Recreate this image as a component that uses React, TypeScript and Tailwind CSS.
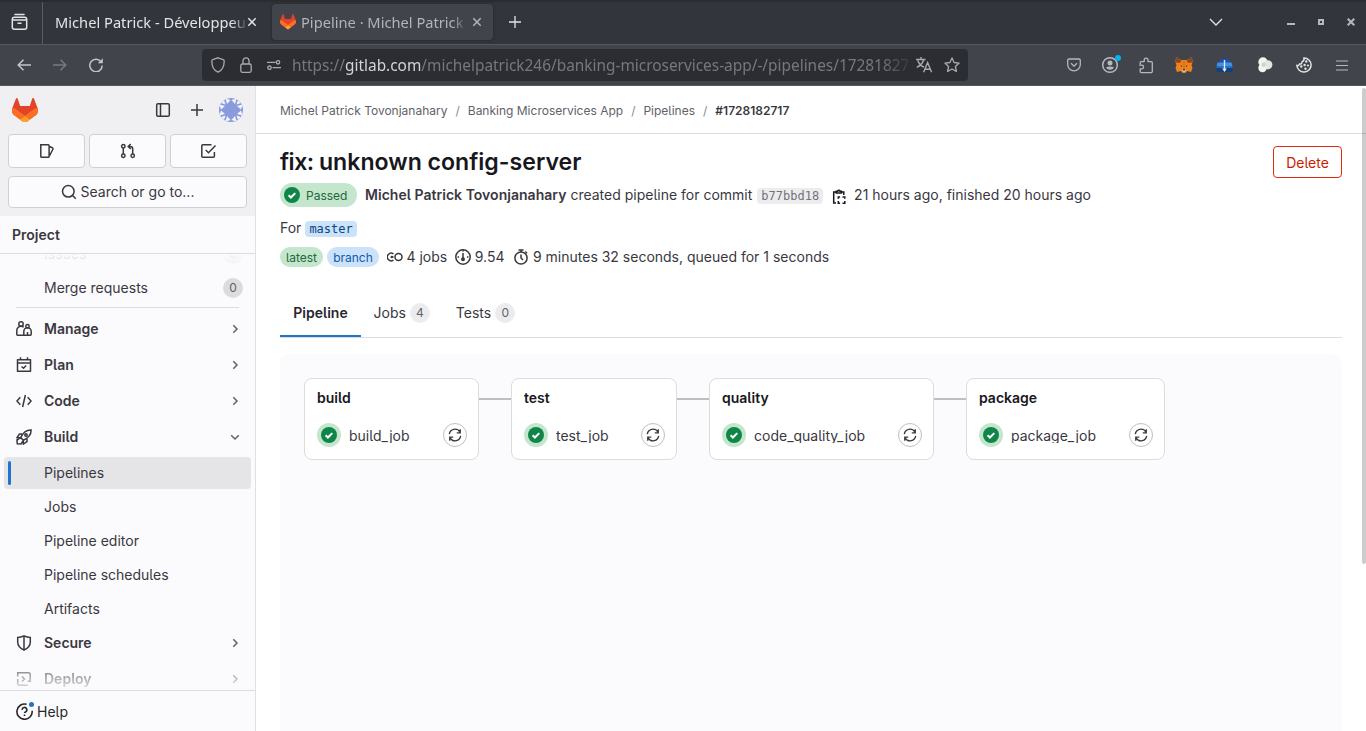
import type { ReactNode } from "react";

const stroke = {
  fill: "none",
  stroke: "currentColor",
  strokeWidth: 1.5,
} as const;

function Icon({ children, size = 16 }: { children: ReactNode; size?: number }) {
  return (
    <svg width={size} height={size} viewBox="0 0 16 16" className="shrink-0" {...stroke}>
      {children}
    </svg>
  );
}

function Tanuki({ size }: { size: number }) {
  return (
    <svg width={size} height={size * 0.96} viewBox="0 0 25 24" className="shrink-0">
      <path fill="#E24329" d="m24.507 9.5-.034-.09L21.082.562a.896.896 0 0 0-1.694.091l-2.29 7.01H7.825L5.535.653a.898.898 0 0 0-1.694-.09L.451 9.411.416 9.5a6.297 6.297 0 0 0 2.09 7.278l.012.01.03.022 5.16 3.867 2.56 1.935 1.554 1.176a1.051 1.051 0 0 0 1.268 0l1.555-1.176 2.56-1.935 5.197-3.89.014-.01A6.297 6.297 0 0 0 24.507 9.5Z" />
      <path fill="#FC6D26" d="m24.507 9.5-.034-.09a11.44 11.44 0 0 0-4.56 2.051l-7.447 5.632 4.742 3.584 5.197-3.89.014-.01A6.297 6.297 0 0 0 24.507 9.5Z" />
      <path fill="#FCA326" d="m7.707 20.677 2.56 1.935 1.555 1.176a1.051 1.051 0 0 0 1.268 0l1.555-1.176 2.56-1.935-4.743-3.584-4.755 3.584Z" />
      <path fill="#FC6D26" d="M5.01 11.461a11.43 11.43 0 0 0-4.56-2.05L.416 9.5a6.297 6.297 0 0 0 2.09 7.278l.012.01.03.022 5.16 3.867 4.745-3.584-7.444-5.632Z" />
    </svg>
  );
}

function CloseIcon() {
  return (
    <svg width="10" height="10" viewBox="0 0 10 10" className="shrink-0" {...stroke}>
      <path d="m1.3 1.3 7.4 7.4M8.7 1.3 1.3 8.7" />
    </svg>
  );
}

function TabStrip() {
  return (
    <div className="flex h-11 shrink-0 items-center border-t-2 border-[#2b2c31] bg-[#33353d] pb-0.5 text-[#e3e4e6]">
      <div className="-mb-0.5 flex h-[42px] w-[43px] shrink-0 items-center border-r border-[#5b5d64] pb-0.5 pl-[11px]">
        <svg width="17" height="18" viewBox="0 0 17 18" {...stroke}>
          <path d="M4 1.500h9" strokeLinecap="round" />
          <path d="M1.300 8V6.500q0-2.200 2.200-2.200h10q2.200 0 2.200 2.200V8M1.300 7v7.200q0 2 2 2h10.400q2 0 2-2V7zM6.500 10.300h4" />
        </svg>
      </div>
      <div className="flex w-[229px] shrink-0 items-center pl-3">
        <div className="w-[190px] overflow-hidden whitespace-nowrap text-[14.67px] [mask-image:linear-gradient(to_right,#000_93%,#0003)]">
          Michel Patrick - Développeur
        </div>
        <span className="ml-0.5">
          <CloseIcon />
        </span>
      </div>
      <div className="flex h-9 w-[221px] shrink-0 items-center rounded bg-[#42444b] pl-2 text-[#b3b4b8] shadow-[0_0_3px_#22242a]">
        <Tanuki size={16} />
        <div className="ml-[5px] w-[169px] overflow-hidden whitespace-nowrap text-[14.67px] [mask-image:linear-gradient(to_right,#000_90%,transparent_98%)]">
          Pipeline · Michel Patrick Tovonjanahary
        </div>
        <span className="ml-0.5">
          <CloseIcon />
        </span>
      </div>
      <svg width="12" height="12" viewBox="0 0 12 12" className="ml-4 shrink-0" {...stroke}>
        <path d="M6 0v12M0 6h12" strokeWidth="1.300" />
      </svg>
      <div className="flex-1" />
      <svg width="14" height="8" viewBox="0 0 14 8" className="mr-16" {...stroke} strokeWidth="1.300">
        <path d="m1 1 6 6 6-6" />
      </svg>
      <div className="mr-[11px] flex items-center text-[#b7b8bc]">
        <div className="mt-1 mr-[23px] h-0.5 w-2 bg-current" />
        <div className="mr-[23px] size-1.5 border-2 border-current" />
        <svg width="8" height="8" viewBox="0 0 8 8" fill="none" stroke="currentColor" strokeWidth="2">
          <path d="m.7.7 6.600 6.600M7.300.7.7 7.300" />
        </svg>
      </div>
    </div>
  );
}

function AddressBar() {
  return (
    <div className="flex h-8 w-[766px] shrink-0 items-center rounded bg-[#2c2d33] pl-[9px] text-[#a9aaae]">
      <svg width="14" height="16" viewBox="0 0 14 16" {...stroke} strokeWidth="1.300">
        <path d="M7 .8 12.200 2.600q1 .3 1 1.400C13.200 9 11 13.500 7 15.200 3 13.500.8 9 .8 4q0-1.100 1-1.400z" />
      </svg>
      <svg width="12" height="16" viewBox="0 0 12 16" className="ml-[15px]" {...stroke} strokeWidth="1.300">
        <rect x=".8" y="7" width="10.400" height="8.300" rx="1.500" />
        <path d="M3 7V3.800a3 3 0 0 1 6 0V7" />
      </svg>
      <svg width="14" height="10" viewBox="0 0 14 10" className="ml-[15px]" {...stroke} strokeWidth="1.300">
        <path d="M0 2.300h8.500M5.500 7.700H14" />
        <circle cx="11" cy="2.300" r="1.700" />
        <circle cx="2.500" cy="7.700" r="1.700" />
      </svg>
      <div className="mt-0.5 ml-[11px] w-[616px] overflow-hidden whitespace-nowrap text-[15.4px] text-[#77787d] [mask-image:linear-gradient(to_right,#000_95.500%,#0003)]">
        https://<span className="text-[#d3d4d7]">gitlab.com</span>
        /michelpatrick246/banking-microservices-app/-/pipelines/1728182717
      </div>
      <svg width="17" height="16" viewBox="0 0 17 16" className="ml-2" {...stroke} strokeWidth="1.400">
        <path d="M0 2.500h9.500M5 0v2.500M7.800 2.500C7 6 4.500 8.500.8 10.300M1.800 3.500C3 7 5 9 8 10M7.600 15.300l4-9.800 4 9.800M9 12.300h5.200" />
      </svg>
      <svg width="16" height="16" viewBox="0 0 16 16" className="ml-[11px]" {...stroke} strokeWidth="1.300">
        <path strokeLinejoin="round" d="m8 .9 2.100 4.600 5 .6-3.700 3.400 1 5L8 12l-4.400 2.500 1-5L.9 6.100l5-.6z" />
      </svg>
    </div>
  );
}

function Extensions() {
  return (
    <div className="flex items-center text-[#b7b8bc]">
      <svg width="14" height="14" viewBox="0 0 14 14" {...stroke} strokeWidth="1.300">
        <path d="M2 1h10q1.300 0 1.300 1.300V6.500a6.300 6.300 0 0 1-12.600 0V2.300Q.7 1 2 1zM4 5.200l3 2.900 3-2.900" />
      </svg>
      <div className="relative ml-5">
        <svg width="18" height="18" viewBox="0 0 18 18" {...stroke}>
          <circle cx="9" cy="9" r="7.300" />
          <circle cx="9" cy="7" r="2.500" fill="currentColor" stroke="none" />
          <path d="M5 11.200q4-1.500 8 0-1 2.600-4 2.600t-4-2.600z" fill="currentColor" stroke="none" />
        </svg>
        <span className="absolute -top-px left-[14px] size-1.5 rounded-full bg-[#00b3f4]" />
      </div>
      <svg width="16" height="17" viewBox="0 0 16 17" className="ml-[19px]" {...stroke} strokeWidth="1.300">
        <path strokeLinejoin="round" d="M2.200 7.200V5.600q0-1 1-1h3V3a1.900 1.900 0 0 1 3.800 0v1.600h3.300q1 0 1 1v9q0 1-1 1H3.200q-1 0-1-1v-2.800h1.600a1.800 1.800 0 0 0 0-3.600H1.200" />
      </svg>
      <svg width="18" height="16" viewBox="0 0 18 16" className="ml-[21px]">
        <path fill="#f0821e" d="M1 0l5.500 3h5L17 0l.5 5-1 3 1 3-1.500 4-4-1-1.500 2h-3L6 14l-4 1-1.500-4 1-3-1-3z" />
        <path fill="#8a4a20" d="M1 0l5.500 3L5 6 1 5.500zM17 0l-5.500 3L13 6l4-.5z" />
        <path fill="#35363c" d="M5 8.300l2.500.8-.6 1zM13 8.300l-2.500.8.6 1z" />
        <path fill="#e2761b" d="M7 4h4l-1 8H8z" />
        <path fill="#d8d2cc" d="M7.300 12h3.400l-.4 2.800H7.700z" />
        <path fill="#35363c" d="M7.800 12h2.400l-.4 1.500H8.200z" />
      </svg>
      <svg width="17" height="15" viewBox="0 0 17 15" className="ml-[23px]">
        <path fill="#1b4fc4" d="M3 5C3 2 5 1 8.500 1S14 2 14 5z" />
        <path fill="#3f93dd" d="M1.500 4.500h14l1 4H.5z" />
        <path fill="#123f80" d="M.5 8h16v6H.5z" />
        <path fill="#2a6fc0" d="M.5 8h16v2H.5z" />
        <path fill="#dcebf8" d="M7.800 2h1.400v8.500h1.600L8.500 14l-2.300-3.500h1.600z" />
      </svg>
      <svg width="16" height="16" viewBox="0 0 16 16" className="ml-6">
        <circle cx="6" cy="5" r="4.700" fill="#f4f4f4" />
        <circle cx="10.800" cy="7.800" r="4.600" fill="#e5e5e5" />
        <circle cx="5.500" cy="11" r="4.200" fill="#f4f4f4" />
        <circle cx="6.700" cy="7.800" r="2.300" fill="#d2d2d2" />
      </svg>
      <svg width="16" height="16" viewBox="0 0 16 16" className="ml-[23px] text-[#e3e4e6]" {...stroke}>
        <path d="M8 .9a7.100 7.100 0 1 0 7.100 7.600q-2 .6-2.600-1.400-2.500.2-2.600-2.300Q7.500 4 8 .9z" transform="matrix(-1 0 0 1 16 0)" />
        <g fill="currentColor" stroke="none">
          <circle cx="10.300" cy="4.500" r="1.200" />
          <circle cx="8.600" cy="8" r="1.200" />
          <circle cx="12" cy="8.500" r="1.100" />
          <circle cx="5.300" cy="9.500" r="1.200" />
          <circle cx="9.500" cy="11.800" r="1.200" />
        </g>
      </svg>
      <svg width="12" height="11" viewBox="0 0 12 11" className="mr-[18px] ml-6" {...stroke} strokeWidth="1.200">
        <path d="M0 1h12M0 5.500h12M0 10h12" />
      </svg>
    </div>
  );
}

function Toolbar() {
  return (
    <div className="flex h-[42px] shrink-0 items-center border-t border-b border-t-[#56585e] border-b-[#55575d] bg-[#42444b] text-[#c4c5c8]">
      <svg width="14" height="12" viewBox="0 0 14 12" className="ml-[17px]" {...stroke}>
        <path d="M14 6H1M6.500.700 1.200 6l5.300 5.300" />
      </svg>
      <svg width="14" height="12" viewBox="0 0 14 12" className="ml-[22px] text-[#77797f]" {...stroke}>
        <path d="M0 6h13M7.500.700 12.800 6l-5.300 5.300" />
      </svg>
      <svg width="14" height="14" viewBox="0 0 14 14" className="mr-[99px] ml-[22px]" {...stroke}>
        <path d="M12.300 4.300A6.200 6.200 0 1 0 13.200 7.600" />
        <path d="M13.800.3v5H8.800z" fill="currentColor" stroke="none" />
      </svg>
      <AddressBar />
      <div className="flex-1" />
      <Extensions />
    </div>
  );
}

const chevronRight = <path d="m6.300 4.200 3.700 3.800-3.700 3.800" />;
const chevronDown = <path d="M4.200 6.300 8 10l3.800-3.700" />;

const icons: Record<string, ReactNode> = {
  Manage: (
    <>
      <circle cx="5" cy="3" r="2.200" />
      <path d="M7.200 14.200H1.700q-.9 0-.9-.9V9.500A4.200 4.200 0 0 1 5 5.300q1.700 0 2.700 1" />
      <circle cx="11.500" cy="5.300" r="1.700" />
      <path d="M7.800 14.200V10.500a3.700 3.700 0 0 1 7.400 0v2.800q0 .9-.9.900zM11.500 11v3" />
    </>
  ),
  Plan: (
    <path d="M1.500 2.700h13v11.500h-13zM1.300 6h13.400M4.500.3v3.200M11.500.3v3.200M5.500 9.500l2 1.700 2.700-2.700" strokeLinejoin="round" />
  ),
  Code: <path d="M4.300 4.200.9 8l3.400 3.800M11.700 4.200 15.100 8l-3.400 3.800M9.400 2 6.600 14" />,
  Build: (
    <>
      <path d="M15.100.9C10 .7 7 3.500 4.700 8.600l2.700 2.700C12.500 9 15.300 6 15.100.9zM6 5H3.500L1 8.600l3.700.2M11 10v2.500L7.400 15l-.2-3.700M4.700 8.600.900 11l.4 3.700L5 15l2.400-3.700" />
      <circle cx="10" cy="6" r="1.200" />
    </>
  ),
  Secure: <path d="M8 .9q3 1.500 6.300 1.600V7.300c0 3.500-2.500 6-6.300 7.900C4.200 13.300 1.700 10.800 1.700 7.300V2.500Q5 2.400 8 .9zV15" />,
  Deploy: (
    <path d="M1.700 5.500V1.700h10.500q2 0 2 2v6.600h-2.500M1.700 8v4.300q0 2 2 2h8M6 5.500 8.500 8 6 10.500" />
  ),
};

function Group({ label, open = false, faded = false }: { label: string; open?: boolean; faded?: boolean }) {
  return (
    <div
      className={`flex h-8 shrink-0 items-center px-4 ${faded ? "[mask-image:linear-gradient(to_bottom,#0009_20%,#0003_75%)]" : ""}`}
    >
      <Icon>{icons[label]}</Icon>
      <span className="ml-3 flex-1 font-semibold">{label}</span>
      <div className="-mr-1 text-[#626168]">
        <Icon>{open ? chevronDown : chevronRight}</Icon>
      </div>
    </div>
  );
}

function SubItem({ label, active = false }: { label: string; active?: boolean }) {
  return (
    <div className={`flex h-8 shrink-0 items-center rounded ${active ? "bg-[#e5e5e7]" : ""}`}>
      <div className={`ml-1 h-6 w-[3px] rounded-full ${active ? "bg-[#1f75cb]" : ""}`} />
      <span className="ml-[33px]">{label}</span>
    </div>
  );
}

function ShortcutButton({ children }: { children: ReactNode }) {
  return (
    <div className="flex h-[34px] w-[77px] items-center justify-center rounded border border-[#d0d0d4] bg-[#fbfafd]">
      <Icon>{children}</Icon>
    </div>
  );
}

function Avatar() {
  return (
    <svg width="24" height="24" viewBox="0 0 24 24" className="ml-[14px]">
      <clipPath id="avatar">
        <circle cx="12" cy="12" r="12" />
      </clipPath>
      <g clipPath="url(#avatar)">
        <rect width="24" height="24" fill="#8a9bdb" />
        <path
          fill="#f4f5fb"
          d="M6.500.5l1.500 5.500 3.500-4zM17.500.5l-1.500 5.500-3.500-4zM6.500 23.500l1.500-5.500 3.500 4zM17.500 23.500l-1.500-5.500-3.500 4zM.5 6.500l5.500 1.500-4 3.500zM.5 17.500l5.500-1.500-4-3.500zM23.500 6.500l-5.500 1.500 4 3.500zM23.500 17.500l-5.500-1.500 4-3.500zM2 5 6.500 6.500 5 2zM22 5l-4.500 1.500L19 2zM2 19l4.500-1.500L5 22zM22 19l-4.500-1.500L19 22z"
        />
      </g>
    </svg>
  );
}

function Sidebar() {
  return (
    <aside className="flex w-64 shrink-0 flex-col border-r border-[#e0e0e4] bg-[#fbfafd] text-[#3a383f]">
      <div className="h-[130px] shrink-0 bg-[#f0eff2] px-2">
        <div className="flex h-12 items-center pl-[3.5px]">
          <Tanuki size={26} />
          <div className="flex-1" />
          <Icon>
            <rect x="1.700" y="1.700" width="12.600" height="12.600" rx="1.300" />
            <path d="M5.500 2v12" />
          </Icon>
          <span className="ml-[18px] flex">
            <Icon>
              <path d="M8 2v12M2 8h12" />
            </Icon>
          </span>
          <div className="mr-1">
            <Avatar />
          </div>
        </div>
        <div className="flex justify-between">
          <ShortcutButton>
            <path d="M1.800 1.700h7.400q.9 0 .9.9v10.800q0 .9-.9.900H2.700q-.9 0-.9-.9zM10.300 3.500l3.200 1.300q.8.400.5 1.200l-3.600 7" />
          </ShortcutButton>
          <ShortcutButton>
            <circle cx="3.300" cy="3.200" r="1.700" />
            <circle cx="3.300" cy="12.800" r="1.700" />
            <circle cx="12.700" cy="12.800" r="1.700" />
            <path d="M3.300 5v6M12.700 11V6q0-2.500-2.500-2.500H8.500M10.700 1 8.200 3.500l2.500 2.500" />
          </ShortcutButton>
          <ShortcutButton>
            <path d="M10.500 1.700H1.800q-1 0-1 1v10.600q0 1 1 1h10.600q1 0 1-1V9M4.700 7 7.500 9.700l7-7.200" />
          </ShortcutButton>
        </div>
        <div className="mt-2 flex h-8 items-center justify-center rounded border border-[#d0d0d4] bg-[#fbfafd]">
          <Icon>
            <circle cx="7.300" cy="7.300" r="5.800" />
            <path d="m11.300 11.300 3.500 3.500" />
          </Icon>
          <span className="ml-1">Search or go to...</span>
        </div>
      </div>
      <div className="flex h-[38px] shrink-0 items-center border-b border-[#dcdcde] pl-3 font-semibold">Project</div>
      <div className="relative flex min-h-0 flex-1 flex-col overflow-hidden px-1">
        <div className="-mt-[16px] flex h-8 shrink-0 items-center opacity-20 [mask-image:linear-gradient(to_bottom,transparent_48%,#000_75%)]">
          <span className="ml-10 flex-1">Issues</span>
          <span className="mr-2 flex size-5 items-center justify-center rounded-full bg-[#dcdcde] text-xs">0</span>
        </div>
        <div className="mt-0.5 flex h-8 shrink-0 items-center">
          <span className="ml-10 flex-1">Merge requests</span>
          <span className="mr-2 flex size-5 items-center justify-center rounded-full bg-[#dcdcde] text-xs text-[#626168]">
            0
          </span>
        </div>
        <div className="mx-3 mt-[3px] mb-[5px] h-px shrink-0 bg-[#dcdcde]" />
        <div className="flex flex-col gap-1 [&>div]:px-3">
          <Group label="Manage" />
          <Group label="Plan" />
          <Group label="Code" />
          <Group label="Build" open />
        </div>
        <div className="mt-1 mb-0.5 flex flex-col gap-0.5">
          <SubItem label="Pipelines" active />
          <SubItem label="Jobs" />
          <SubItem label="Pipeline editor" />
          <SubItem label="Pipeline schedules" />
          <SubItem label="Artifacts" />
        </div>
        <div className="flex flex-col gap-1 [&>div]:px-3">
          <Group label="Secure" />
          <Group label="Deploy" faded />
        </div>
      </div>
      <div className="flex h-[41px] shrink-0 items-center border-t border-[#dcdcde] pt-px pl-4 text-[#28272d]">
        <div className="relative flex">
          <Icon size={17}>
            <path d="M10 1.200A7.200 7.200 0 1 0 15.200 7.300M5.800 6.500a2.200 2.200 0 1 1 3.400 1.700q-1.200.7-1.200 1.300M8 10.800v1.500" />
          </Icon>
          <span className="absolute -top-px left-[13px] size-[5px] rounded-full bg-[#1f75cb]" />
        </div>
        <span className="ml-1">Help</span>
      </div>
    </aside>
  );
}

function CheckCircle() {
  return (
    <svg width="16" height="16" viewBox="0 0 16 16" className="shrink-0">
      <circle cx="8" cy="8" r="8" fill="#108548" />
      <path d="m4.600 8.300 2.300 2.200 4.400-4.400" fill="none" stroke="#fff" strokeWidth="2" />
    </svg>
  );
}

function Stage({ name, job, width }: { name: string; job: string; width: string }) {
  return (
    <div className={`h-[82px] shrink-0 rounded-lg border border-[#dcdcde] bg-white px-3 ${width}`}>
      <div className="mt-[9px] h-5 leading-5 font-semibold text-[#18171d]">{name}</div>
      <div className="mt-[15px] flex h-6 items-center">
        <span className="flex size-6 items-center justify-center rounded-full bg-[#c3e6cd]">
          <CheckCircle />
        </span>
        <span className="mt-px ml-2 flex-1 overflow-hidden leading-[14px]">{job}</span>
        <span className="-mr-px flex size-6 items-center justify-center rounded-full border border-[#bfbfc3]">
          <svg width="14" height="14" viewBox="0 0 16 16" {...stroke}>
            <path d="M1.500 7A6.500 6.500 0 0 1 13.500 4.500M14.500 9A6.500 6.500 0 0 1 2.500 11.500M14 1.500v4h-4M2 14.500v-4h4" />
          </svg>
        </span>
      </div>
    </div>
  );
}

function Connector() {
  return <div className="mt-5 h-0.5 w-8 shrink-0 bg-[#bfbfc3]" />;
}

function Count({ children }: { children: ReactNode }) {
  return (
    <span className="flex size-5 items-center justify-center rounded-full bg-[#ececef] text-xs text-[#626168]">
      {children}
    </span>
  );
}

function Main() {
  return (
    <main className="relative flex min-w-0 flex-1 flex-col overflow-hidden bg-white text-[#3a383f]">
      <nav className="flex h-12 shrink-0 items-center gap-2 border-b border-[#dcdcde] pt-[3px] pl-6 text-xs text-[#626168]">
        <span>Michel Patrick Tovonjanahary</span>
        <span className="text-[#89888d]">/</span>
        <span>Banking Microservices App</span>
        <span className="text-[#89888d]">/</span>
        <span>Pipelines</span>
        <span className="text-[#89888d]">/</span>
        <span className="font-semibold text-[#3a383f]">#1728182717</span>
      </nav>
      <div className="flex min-h-0 flex-1 flex-col px-6">
        <div className="mt-3 flex h-8 shrink-0 items-center justify-between">
          <h1 className="text-[23.1px] font-semibold text-[#18171d]">
            <span className="tracking-[-0.5px]">fix: </span>
            unknown config-server
          </h1>
          <button className="h-8 w-[69px] rounded border border-[#dd2b0e] pt-px text-[#c91c00]">Delete</button>
        </div>
        <div className="mt-[5px] flex h-6 shrink-0 items-center">
          <span className="flex h-6 w-[77px] items-center rounded-full bg-[#c3e6cd] pl-1 text-xs text-[#24663b]">
            <CheckCircle />
            <span className="mt-px ml-1.5">Passed</span>
          </span>
          <span className="ml-2 font-semibold tracking-[0.03px]">Michel Patrick Tovonjanahary</span>
          <span className="ml-1">created pipeline for commit</span>
          <span className="mt-0.5 ml-[5px] h-4 rounded bg-[#ececef] px-1 font-['DejaVu_Sans_Mono',monospace] text-[12px] leading-4 text-[#737278]">
            b77bbd18
          </span>
          <span className="mt-[3px] ml-2 flex text-[#18171d]">
            <Icon>
              <path d="M5 3H2.700v11H5M10.500 3h2.300v3M5.300 4V2.200h1.400a1.200 1.200 0 0 1 2.300 0h1.400V4zM7.300 9.800V8h1.800M11.500 8h2.300v1.800M7.300 12v2.300h1.800M11.500 14.300h2.300V12" />
            </Icon>
          </span>
          <span className="ml-[7px]">21 hours ago, finished 20 hours ago</span>
        </div>
        <div className="mt-[11px] flex h-5 shrink-0 items-center">
          <span>For</span>
          <span className="mt-0.5 ml-1 h-4 rounded bg-[#cbe2f9] px-1 font-['DejaVu_Sans_Mono',monospace] text-[12px] leading-4 text-[#064787]">
            master
          </span>
        </div>
        <div className="mt-[9px] flex h-5 shrink-0 items-center">
          <span className="flex h-5 w-[43px] items-center justify-center rounded-full bg-[#c3e6cd] pt-px text-xs text-[#24663b]">
            latest
          </span>
          <span className="ml-1 flex h-5 w-[52px] items-center justify-center rounded-full bg-[#cbe2f9] pt-px text-xs text-[#0b5cad]">
            branch
          </span>
          <span className="ml-2 flex">
            <Icon>
              <circle cx="11.500" cy="8" r="3.500" />
              <path d="M6.500 5A3.800 3.800 0 1 0 6.500 11M6.500 8h-2" />
              <circle cx="4.800" cy="8" r=".6" />
            </Icon>
          </span>
          <span className="ml-[3.5px]">4 jobs</span>
          <span className="ml-[7.5px] flex">
            <Icon>
              <circle cx="8" cy="8" r="7.200" />
              <path d="M8 4v7M8 .8v1.700M2.500 8H4M12 8h1.500" />
              <circle cx="8" cy="10.300" r="1.200" fill="currentColor" />
            </Icon>
          </span>
          <span className="ml-1">9.54</span>
          <span className="ml-[8.500px] flex">
            <Icon>
              <circle cx="8" cy="9" r="6.100" />
              <path d="M5.500 1h5M8 1v2M12.300 2.500l1.700 1.700M8 5.500V9l2 2" />
            </Icon>
          </span>
          <span className="ml-1">9 minutes 32 seconds, queued for 1 seconds</span>
        </div>
        <div className="mt-[22px] flex h-[49px] shrink-0 border-b border-[#dcdcde]">
          <div className="flex w-[81px] items-center justify-center border-b-2 border-[#1f75cb] pt-px font-semibold text-[#28272d]">
            Pipeline
          </div>
          <div className="ml-[12.5px] flex items-center gap-1 pb-px">
            Jobs <Count>4</Count>
          </div>
          <div className="ml-[26px] flex items-center gap-1 pb-px">
            Tests <Count>0</Count>
          </div>
        </div>
        <div className="mt-4 flex min-h-0 flex-1 items-start rounded-t-lg bg-[#fbfafd] p-6">
          <Stage name="build" job="build_job" width="w-[175px]" />
          <Connector />
          <Stage name="test" job="test_job" width="w-[166px]" />
          <Connector />
          <Stage name="quality" job="code_quality_job" width="w-[225px]" />
          <Connector />
          <Stage name="package" job="package_job" width="w-[199px]" />
        </div>
      </div>
      <div className="absolute top-0.5 right-0 h-[476px] w-1 rounded-full bg-black/20" />
    </main>
  );
}

export default function App() {
  return (
    <div className="flex h-[731px] w-[1366px] flex-col overflow-hidden font-['Noto_Sans',sans-serif]">
      <TabStrip />
      <Toolbar />
      <div className="flex min-h-0 flex-1 font-['Inter',sans-serif] text-sm [font-feature-settings:'cv05']">
        <Sidebar />
        <Main />
      </div>
    </div>
  );
}
